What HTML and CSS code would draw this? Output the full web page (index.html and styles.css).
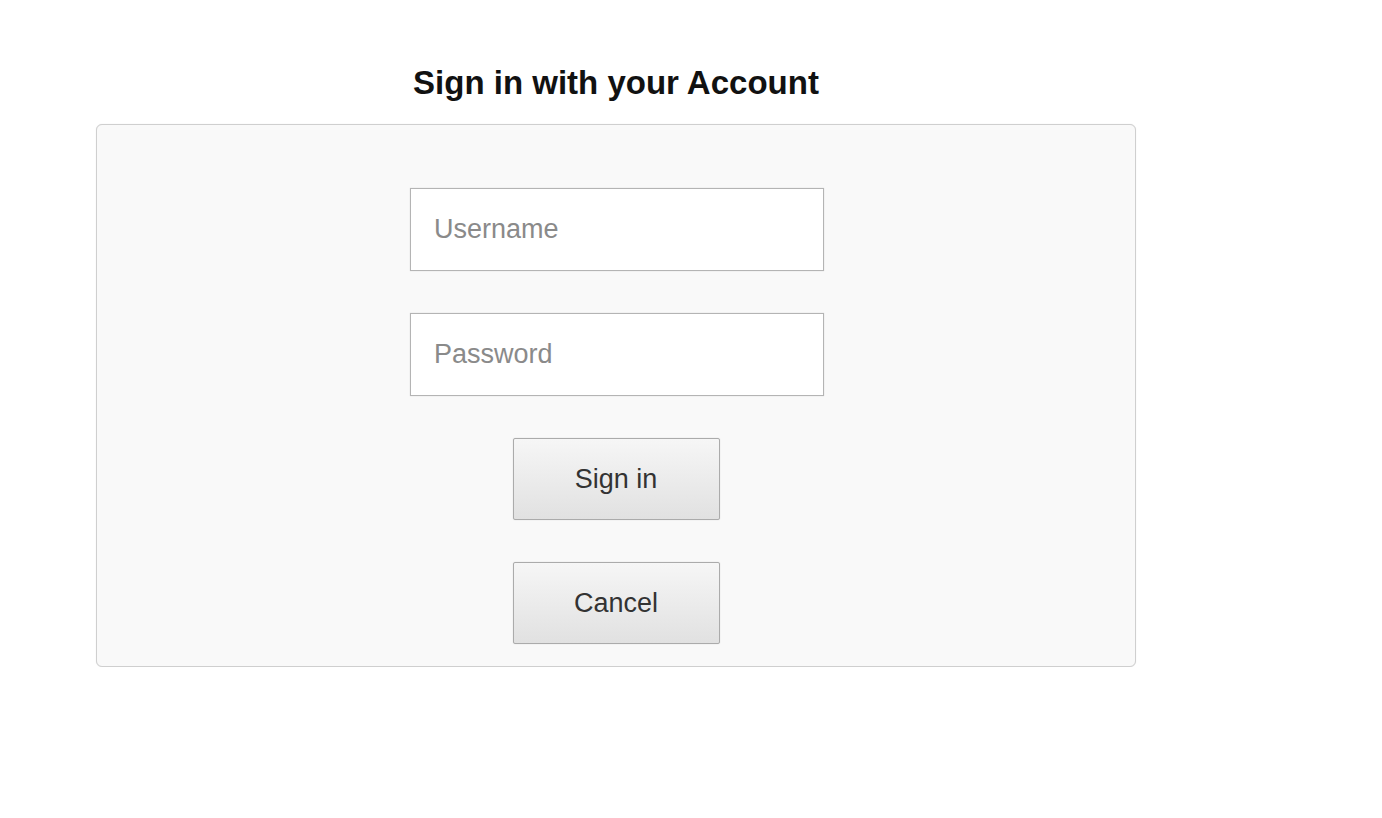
FILE: index.html
```html
<!DOCTYPE html>
<html lang="en">
<head>
<meta charset="utf-8">
<title>Sign in</title>
<link rel="stylesheet" href="styles.css">
</head>
<body>
<div class="wrap">
  <h1 class="title">Sign in with your Account</h1>
  <form class="panel">
    <input class="field" type="text" placeholder="Username">
    <input class="field" type="password" placeholder="Password">
    <button class="btn" type="button">Sign in</button>
    <button class="btn" type="button">Cancel</button>
  </form>
</div>
</body>
</html>
```
FILE: styles.css
```css
html, body {
  margin: 0;
  padding: 0;
  background: #ffffff;
  font-family: "Liberation Sans", Arial, sans-serif;
}
.wrap {
  width: 1040px;
  margin-left: 96px;
  padding-top: 64px;
}
.title {
  margin: 0 0 22px 0;
  font-size: 33px;
  line-height: 38px;
  font-weight: bold;
  color: #111;
  text-align: center;
}
.panel {
  box-sizing: border-box;
  width: 1040px;
  height: 543px;
  margin: 0;
  border: 1px solid #cfcfcf;
  box-shadow: 0 0 1px #dddddd;
  border-radius: 6px;
  background: #f9f9f9;
  display: flex;
  flex-direction: column;
  align-items: center;
  padding-top: 63px;
  gap: 42px;
}
.field {
  box-sizing: border-box;
  width: 414px;
  height: 83px;
  margin: 0 0 0 2px;
  border: 1px solid #b4b4b4;
  box-shadow: 0 0 1px #cccccc;
  background: #fff;
  padding: 0 0 0 23px;
  font-family: "Liberation Sans", Arial, sans-serif;
  font-size: 27px;
  color: #333;
  outline: none;
}
.field::placeholder {
  color: #8a8a8a;
}
.btn {
  box-sizing: border-box;
  width: 207px;
  height: 82px;
  margin: 0;
  border: 1px solid #ababab;
  box-shadow: 0 0 1px #c4c4c4;
  border-radius: 2px;
  background: linear-gradient(to bottom, #f6f6f6, #e1e1e1);
  font-family: "Liberation Sans", Arial, sans-serif;
  font-size: 27px;
  color: #333;
  padding: 0;
}
```
